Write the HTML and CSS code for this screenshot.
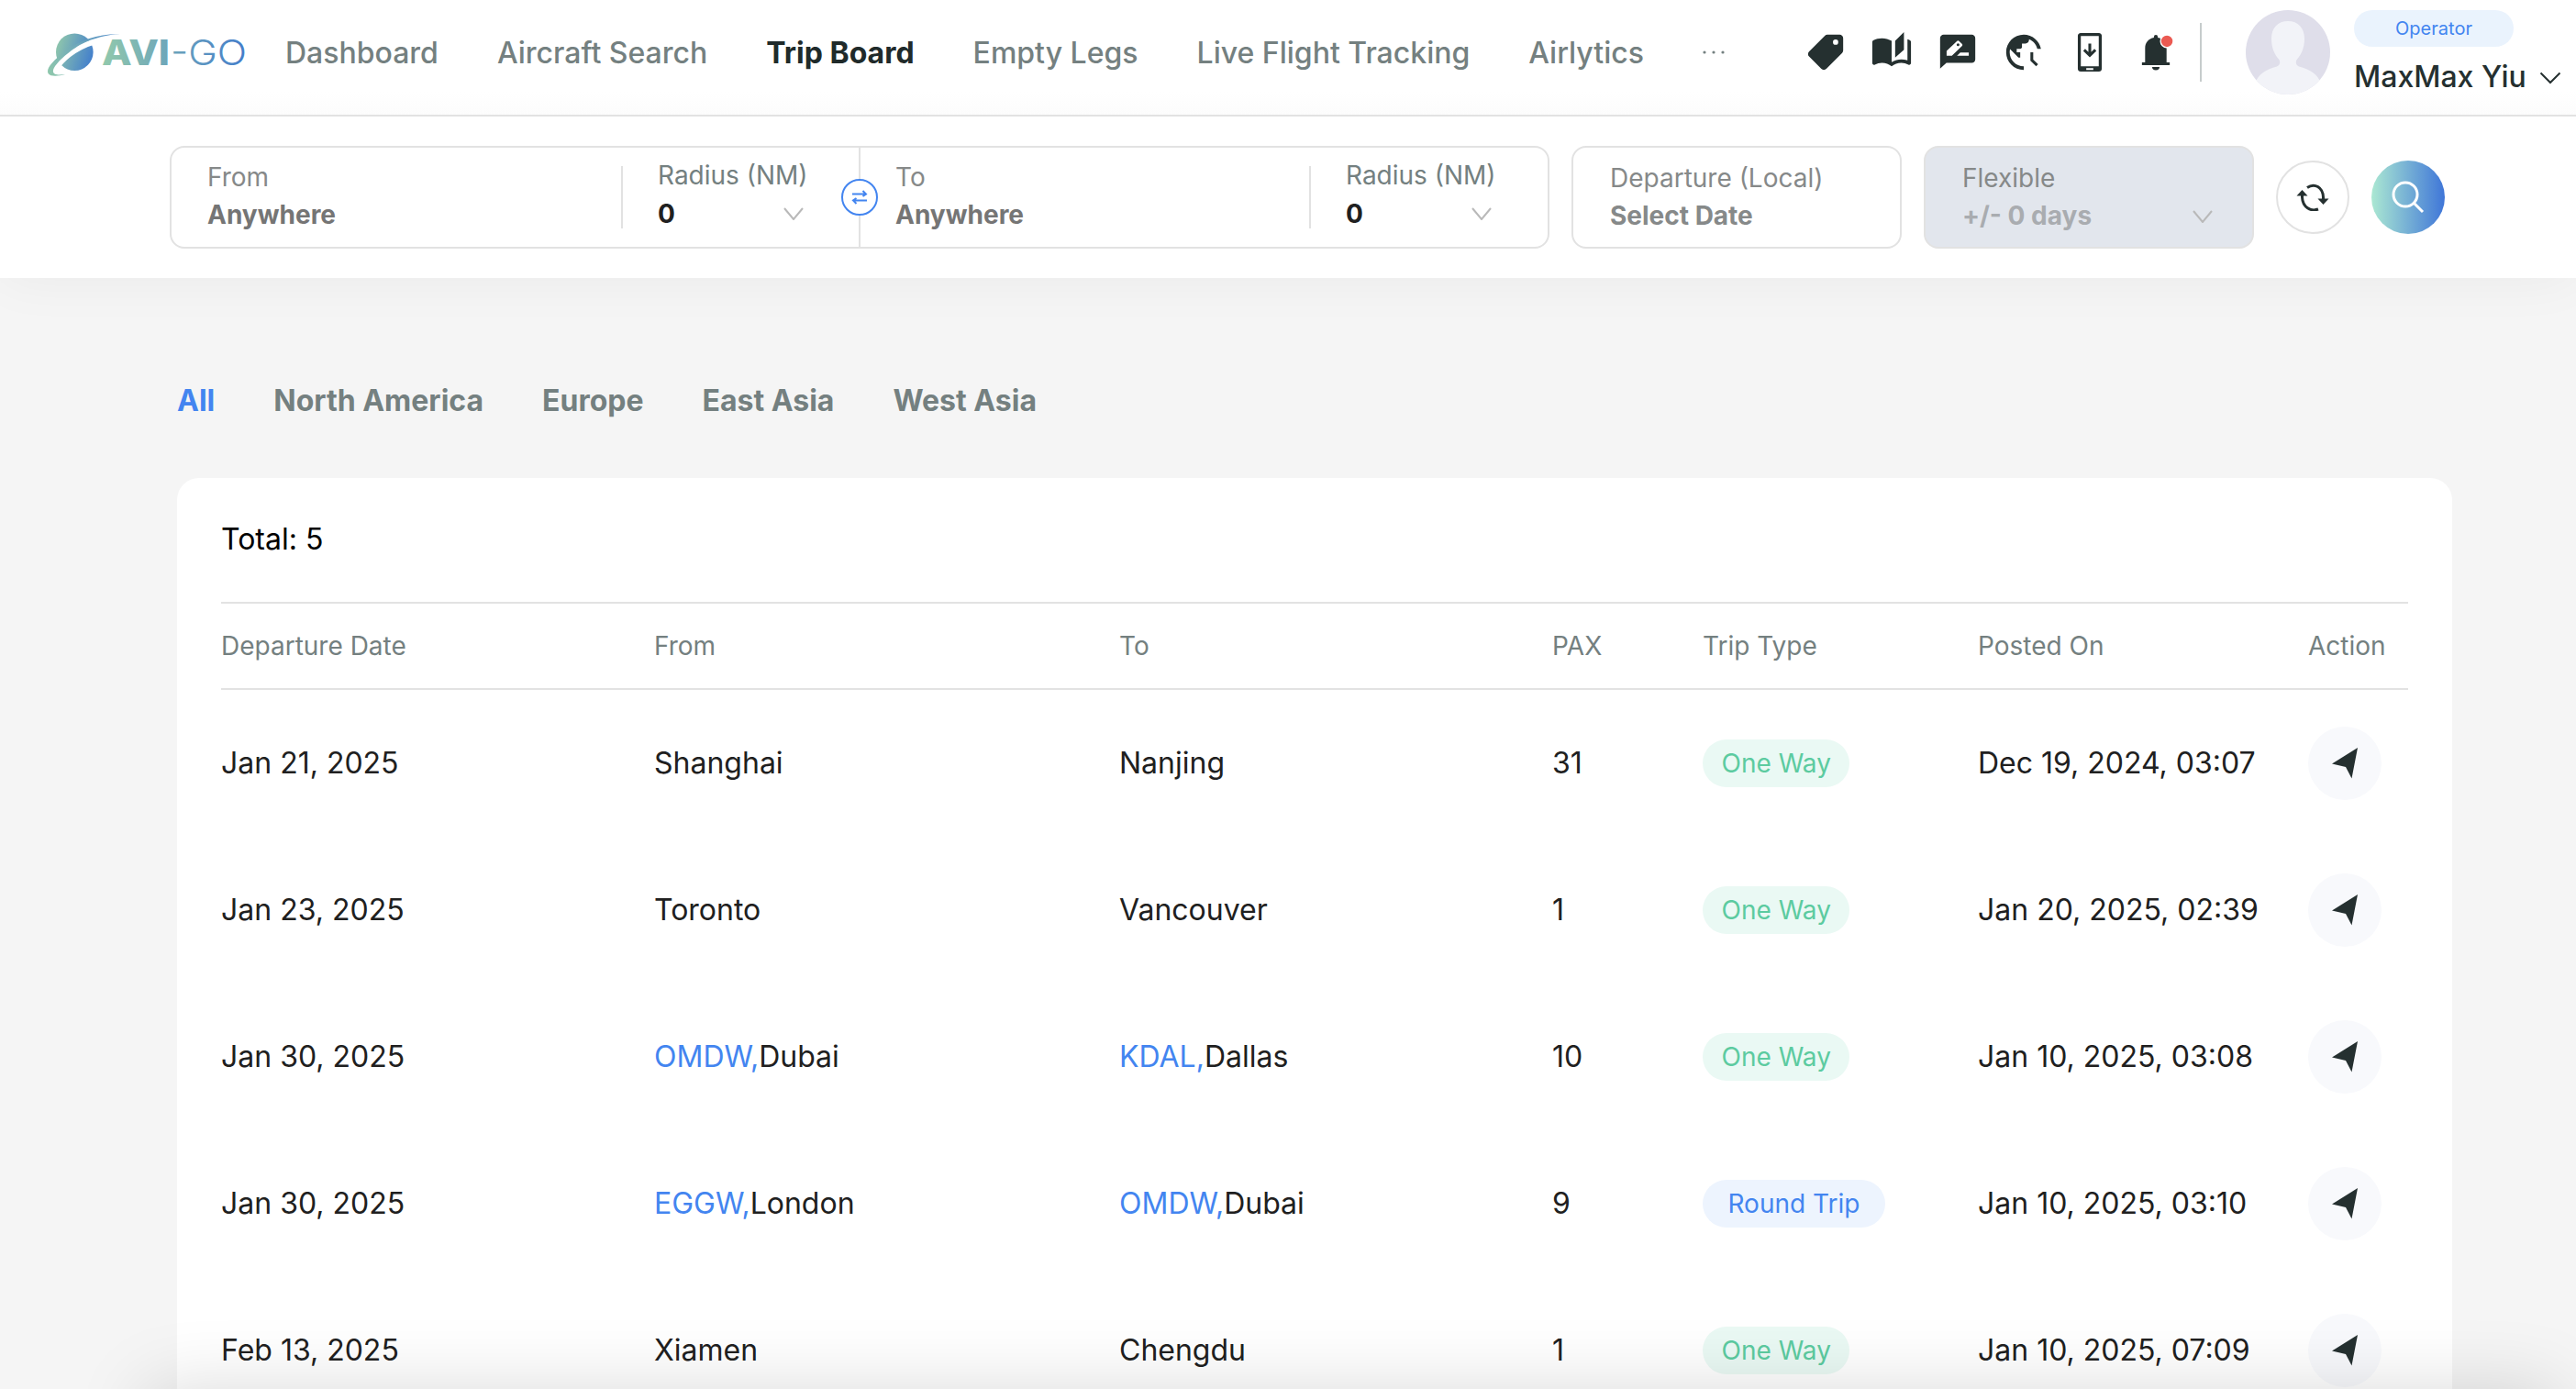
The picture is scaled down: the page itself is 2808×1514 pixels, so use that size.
FILE: index.html
```html
<!DOCTYPE html>
<html lang="en">

<head>
    <meta charset="UTF-8">
    <meta name="viewport" content="width=device-width, initial-scale=1.0">
    <title>Trip Board</title>
    <link rel="stylesheet" href="styles.css">
</head>

<body>
    <header class="header">
        <svg class="logo" viewBox="52 34 220 52">
            <defs>
                <linearGradient id="planet" x1="0" x2="1" y1="0.2" y2="0.5">
                    <stop offset="0" stop-color="#92c9ab" />
                    <stop offset="1" stop-color="#4581cb" />
                </linearGradient>
                <linearGradient id="ring" gradientUnits="userSpaceOnUse" x1="52" x2="131" y1="80" y2="37">
                    <stop offset="0" stop-color="#8fc8ac" />
                    <stop offset="1" stop-color="#4b86c9" />
                </linearGradient>
                <linearGradient id="word" gradientUnits="userSpaceOnUse" x1="111" x2="268" y1="0" y2="0">
                    <stop offset="0" stop-color="#92c9ac" />
                    <stop offset="1" stop-color="#437dca" />
                </linearGradient>
            </defs>
            <circle cx="81.3" cy="56.7" r="20.3" fill="url(#planet)" />
            <path d="M60 76C66 66 80 52 104 45" fill="none" stroke="#fff" stroke-width="6" />
            <path d="M131 37.2C108 36.5 88 43 71 56C57 66.500 50 75 52.500 80C55 84 64 83 71 81C64 82 57 82 58 76.500C60 69 74 57 87 49C102 41 118 37.500 131 37.200Z" fill="url(#ring)" />
            <g class="word">
                <text class="word-bold" x="111" y="71" textLength="74" lengthAdjust="spacingAndGlyphs">AVI</text>
                <text class="word-light" x="186" y="71" textLength="83" lengthAdjust="spacingAndGlyphs">-GO</text>
            </g>
        </svg>
        <nav class="nav">
            <a>Dashboard</a>
            <a>Aircraft Search</a>
            <a class="active">Trip Board</a>
            <a>Empty Legs</a>
            <a>Live Flight Tracking</a>
            <a>Airlytics</a>
            <svg class="more" viewBox="0 0 24 4"><circle cx="2" cy="2" r="1.600" /><circle cx="12" cy="2" r="1.600" /><circle cx="22" cy="2" r="1.600" /></svg>
        </nav>
        <div class="tools">
            <svg viewBox="0 0 24 24"><path transform="matrix(-1 0 0 1 24 0)" d="M21.410 11.580l-9-9C12.050 2.220 11.550 2 11 2H4c-1.100 0-2 .9-2 2v7c0 .55.22 1.050.59 1.420l9 9c.36.36.86.58 1.410.58.55 0 1.050-.22 1.410-.59l7-7c.37-.36.59-.86.59-1.410 0-.55-.23-1.060-.59-1.420zM6.300 7.700a1.500 1.500 0 1 1 0-3a1.500 1.500 0 0 1 0 3z" /></svg>
            <svg viewBox="0 0 24 24"><path d="M22.470 5.200C22 4.960 21.510 4.760 21 4.590v12.030C19.860 16.210 18.690 16 17.500 16c-1.900 0-3.780.54-5.500 1.580V5.480C10.380 4.550 8.510 4 6.500 4 4.710 4 3.020 4.440 1.530 5.200 1.200 5.360 1 5.710 1 6.080v12.080c0 .58.47.99 1 .99.16 0 .32-.04.48-.12C3.690 18.400 5.050 18 6.500 18c2.070 0 3.980.82 5.500 2 1.520-1.180 3.430-2 5.500-2 1.450 0 2.810.4 4.020 1.040.16.08.32.12.48.12.52 0 1-.41 1-.99V6.080c0-.37-.2-.72-.53-.88zM19 .5l-5 5V15l5-4.500V.5z" /></svg>
            <svg viewBox="0 0 24 24"><path d="M20 2H4c-1.100 0-2 .9-2 2v17.300L5.600 18H20c1.100 0 2-.9 2-2V4c0-1.100-.9-2-2-2zM5.700 14v-2.800l5.800-5.500c.4-.4 1-.4 1.400 0l1.500 1.500c.4.4.4.9 0 1.300L8.700 14h-3zm12.600 0h-6.700l1.900-1.900h4.800V14z" /><circle cx="12.200" cy="7.700" r=".8" /></svg>
            <svg viewBox="0 0 24 24"><path d="M12 20v2C6.480 22 2 17.520 2 12S6.480 2 12 2c4.840 0 8.870 3.440 9.800 8h-2.070c-.64-2.460-2.400-4.470-4.730-5.410V5c0 1.100-.9 2-2 2h-2v2c0 .55-.45 1-1 1H8v2h2v3H9l-4.790-4.790C4.080 10.790 4 11.380 4 12c0 4.410 3.590 8 8 8z" /><path class="line" d="M16.600 12v4.500l3 2.900" /></svg>
            <svg viewBox="0 0 24 24"><path fill-rule="evenodd" d="M6.800 1h10.400c.9 0 1.600.7 1.600 1.600v18.800c0 .9-.7 1.600-1.600 1.600H6.800c-.9 0-1.600-.7-1.600-1.600V2.600C5.200 1.700 5.900 1 6.800 1zM6.900 2.700V20h10.200V2.700zM10 21v1h4v-1z" /><path class="line" d="M12 7v6.500M8.800 10.600l3.200 3.100 3.200-3.100" /></svg>
            <svg viewBox="0 0 24 24"><path d="M10.900 3.200a1.100 1.100 0 0 1 2.200 0v.5C16.200 4.300 18.100 6.600 18.100 9.600v8.200h1.800v1.500H4.100v-1.500h1.800V9.600c0-3 1.900-5.300 5-5.900zM9.900 20.400h4.200a2.100 1.800 0 0 1-4.200 0z" /><circle class="dot" cx="18.300" cy="5.700" r="3.600" /></svg>
        </div>
        <div class="user">
            <svg class="avatar" viewBox="0 0 92 92">
                <clipPath id="round"><circle cx="46" cy="46" r="46" /></clipPath>
                <g clip-path="url(#round)">
                    <path d="M0 0H92V92H0Z" fill="#dfdeea" />
                    <path d="M46 12C57 12 64 19.500 64 31C64 42 60 49 56 53.500C54 56 54.500 60 58 61.500C70 65 78 69 82 80L82 92H10V80C14 69 22 65 34 61.500C37.500 60 38 56 36 53.500C32 49 28 42 28 31C28 19.500 35 12 46 12Z" fill="#f2f3f8" />
                </g>
            </svg>
            <div class="user-info">
                <span class="role">Operator</span>
                <span class="user-name">MaxMax Yiu
                    <svg class="user-arrow" viewBox="0 0 24 14"><path d="M1.500 1.500L12 12L22.500 1.500" /></svg>
                </span>
            </div>
        </div>
    </header>

    <section class="search">
        <div class="route">
            <div class="place">
                <label>From</label>
                <strong>Anywhere</strong>
            </div>
            <div class="radius">
                <label>Radius (NM)</label>
                <strong>0 <svg class="arrow" viewBox="0 0 22 14"><path d="M1 1L11 13L21 1" /></svg></strong>
            </div>
            <div class="place place-to">
                <label>To</label>
                <strong>Anywhere</strong>
            </div>
            <div class="radius">
                <label>Radius (NM)</label>
                <strong>0 <svg class="arrow" viewBox="0 0 22 14"><path d="M1 1L11 13L21 1" /></svg></strong>
            </div>
            <span class="swap"><svg viewBox="0 0 18 16"><path d="M1 4.500H16M12.500 1L16 4.500L12.500 7M17 11.500H2M5.500 9L2 11.500L5.500 15" /></svg></span>
        </div>
        <div class="field">
            <label>Departure (Local)</label>
            <strong>Select Date</strong>
        </div>
        <div class="field disabled">
            <label>Flexible</label>
            <strong>+/- 0 days <svg class="arrow" viewBox="0 0 22 14"><path d="M1 1L11 13L21 1" /></svg></strong>
        </div>
        <button class="round-btn">
            <svg viewBox="0 0 36 30"><path d="M12 4.500C20 -1 29 4 29.500 15V18M24 28C16 31 7 26 6.500 15V11" /><path class="tip" d="M23.500 16.500H35.500L29.500 23ZM.5 13.500H12.500L6.500 7Z" /></svg>
        </button>
        <button class="round-btn go-btn">
            <svg viewBox="0 0 36 36"><circle cx="15" cy="15" r="13" /><path d="M24.500 24.500L34 34" /></svg>
        </button>
    </section>

    <main>
        <div class="tabs">
            <a class="active">All</a>
            <a>North America</a>
            <a>Europe</a>
            <a>East Asia</a>
            <a>West Asia</a>
        </div>
        <div class="card">
            <p class="total">Total: 5</p>
            <table>
                <thead>
                    <tr>
                        <th class="col-date">Departure Date</th>
                        <th class="col-from">From</th>
                        <th class="col-to">To</th>
                        <th class="col-pax">PAX</th>
                        <th class="col-type">Trip Type</th>
                        <th class="col-posted">Posted On</th>
                        <th>Action</th>
                    </tr>
                </thead>
                <tbody>
                    <tr>
                        <td>Jan 21, 2025</td>
                        <td>Shanghai</td>
                        <td>Nanjing</td>
                        <td>31</td>
                        <td><span class="tag">One Way</span></td>
                        <td>Dec 19, 2024, 03:07</td>
                        <td><span class="send"><svg viewBox="0 0 28 34"><path d="M28 0L21.500 33.500L15 21L0 17.500Z" /></svg></span></td>
                    </tr>
                    <tr>
                        <td>Jan 23, 2025</td>
                        <td>Toronto</td>
                        <td>Vancouver</td>
                        <td>1</td>
                        <td><span class="tag">One Way</span></td>
                        <td>Jan 20, 2025, 02:39</td>
                        <td><span class="send"><svg viewBox="0 0 28 34"><path d="M28 0L21.500 33.500L15 21L0 17.500Z" /></svg></span></td>
                    </tr>
                    <tr>
                        <td>Jan 30, 2025</td>
                        <td><a>OMDW,</a>Dubai</td>
                        <td><a>KDAL,</a>Dallas</td>
                        <td>10</td>
                        <td><span class="tag">One Way</span></td>
                        <td>Jan 10, 2025, 03:08</td>
                        <td><span class="send"><svg viewBox="0 0 28 34"><path d="M28 0L21.500 33.500L15 21L0 17.500Z" /></svg></span></td>
                    </tr>
                    <tr>
                        <td>Jan 30, 2025</td>
                        <td><a>EGGW,</a>London</td>
                        <td><a>OMDW,</a>Dubai</td>
                        <td>9</td>
                        <td><span class="tag tag-round">Round Trip</span></td>
                        <td>Jan 10, 2025, 03:10</td>
                        <td><span class="send"><svg viewBox="0 0 28 34"><path d="M28 0L21.500 33.500L15 21L0 17.500Z" /></svg></span></td>
                    </tr>
                    <tr>
                        <td>Feb 13, 2025</td>
                        <td>Xiamen</td>
                        <td>Chengdu</td>
                        <td>1</td>
                        <td><span class="tag">One Way</span></td>
                        <td>Jan 10, 2025, 07:09</td>
                        <td><span class="send"><svg viewBox="0 0 28 34"><path d="M28 0L21.500 33.500L15 21L0 17.500Z" /></svg></span></td>
                    </tr>
                </tbody>
            </table>
        </div>
    </main>
    <div class="bottom-shadow"></div>
</body>

</html>
```

FILE: styles.css
```css
* {
    box-sizing: border-box;
}

body {
    margin: 0;
    height: 1514px;
    overflow: hidden;
    background: #f5f5f5;
    color: #202020;
    font-family: Inter, sans-serif;
    font-size: 32px;
}

/* header */
.header {
    display: flex;
    align-items: center;
    height: 127px;
    padding: 0 0 11px 52px;
    background: linear-gradient(#fff 100px, #fcfcfc);
    border-bottom: 2px solid #e2e2e2;
}

.logo {
    width: 220px;
    height: 52px;
    margin-top: 6px;
    flex: none;
}

.word {
    fill: url(#word);
    font-size: 38.5px;
}

.word-bold {
    font-weight: 800;
}

.word-light {
    font-weight: 300;
}

.nav {
    display: flex;
    align-items: center;
    gap: 64px;
    width: 1657px;
    margin-left: 39px;
    color: #748080;
    font-weight: 500;
    white-space: nowrap;
}

.nav .active {
    color: #202a2a;
    font-weight: 700;
}

.more {
    width: 24px;
    height: 4px;
    fill: #748080;
}

.tools {
    display: flex;
    align-items: center;
    gap: 26px;
    flex: none;
    height: 64px;
    width: 433px;
    margin-left: -1px;
    border-right: 2px solid #c6cccc;
}

.tools svg {
    width: 46px;
    height: 46px;
    flex: none;
    fill: #253030;
}

.tools .line {
    fill: none;
    stroke: #253030;
    stroke-width: 1.6;
}

.tools .dot {
    fill: #eb5a52;
    stroke: #fff;
    stroke-width: .7;
}

.user {
    display: flex;
    flex: none;
    margin-left: 48px;
}

.avatar {
    width: 92px;
    height: 92px;
}

.user-info {
    margin-left: 26px;
}

.role {
    display: block;
    width: 174px;
    height: 40px;
    border-radius: 20px;
    background: #eaf3fd;
    color: #4385f0;
    font-size: 20px;
    line-height: 40px;
    text-align: center;
}

.user-name {
    display: flex;
    align-items: center;
    height: 64px;
    margin-bottom: -12px;
    color: #253030;
    font-weight: 500;
    white-space: nowrap;
}

.user-arrow {
    width: 24px;
    height: 14px;
    margin: 4px 0 0 14px;
    fill: none;
    stroke: #253030;
    stroke-width: 2;
}

/* search bar */
.search {
    display: flex;
    align-items: center;
    gap: 24px;
    height: 176px;
    padding-left: 185px;
    background: #fff;
    box-shadow: 0 0 60px rgba(0, 0, 0, .05);
    /* keep the shadow off the header */
    clip-path: inset(0 0 -80px 0);
}

.search label,
.search strong {
    display: block;
    font-size: 28px;
    line-height: 42px;
    white-space: nowrap;
}

.search label {
    color: #868989;
}

.search strong {
    color: #757575;
    font-weight: 700;
}

.route {
    position: relative;
    display: flex;
    align-items: center;
    width: 1504px;
    height: 112px;
    border: 2px solid #e2e2e2;
    border-radius: 16px;
}

.place {
    width: 490px;
    height: 108px;
    padding: 11px 0 0 39px;
}

.place strong {
    line-height: 40px;
}

.place-to {
    border-left: 2px solid #e2e2e2;
    padding-left: 38px;
    width: 491px;
}

.radius {
    height: 68px;
    width: 259px;
    padding-left: 38px;
    border-left: 2px solid #e2e2e2;
}

.radius label {
    margin-top: -11px;
    color: #748080;
}

.search .radius strong {
    display: flex;
    align-items: center;
    justify-content: space-between;
    width: 159px;
    color: #202020;
}

.arrow {
    width: 22px;
    height: 14px;
    fill: none;
    stroke: #b9b9b9;
    stroke-width: 2;
}

.swap {
    position: absolute;
    left: 730px;
    top: 34px;
    display: flex;
    align-items: center;
    justify-content: center;
    width: 40px;
    height: 40px;
    border: 2px solid #4385f0;
    border-radius: 50%;
    background: #fff;
}

.swap svg {
    width: 18px;
    height: 16px;
    fill: none;
    stroke: #4385f0;
    stroke-width: 2;
}

.field {
    width: 360px;
    height: 112px;
    padding: 13px 40px 0;
    border: 2px solid #e2e2e2;
    border-radius: 16px;
}

.search .field label,
.search .field strong {
    line-height: 41px;
}

.search .field strong {
    color: #868989;
}

.disabled {
    background: #e2e6ed;
}

.search .disabled strong {
    display: flex;
    align-items: center;
    justify-content: space-between;
    padding-right: 3px;
    color: #a9acb0;
}

.round-btn {
    display: flex;
    align-items: center;
    justify-content: center;
    width: 80px;
    height: 80px;
    padding: 0;
    border: 2px solid #e2e2e2;
    border-radius: 50%;
    background: #fff;
}

.round-btn svg {
    width: 36px;
    height: 30px;
    fill: none;
    stroke: #253030;
    stroke-width: 3;
}

.round-btn .tip {
    fill: #253030;
    stroke: none;
}

.go-btn {
    border: none;
    background: linear-gradient(90deg, #abe8d2, #3f76d8);
}

.go-btn svg {
    height: 36px;
    stroke: #fff;
}

/* region tabs */
main {
    padding: 114px 135px 0 193px;
}

.tabs {
    display: flex;
    gap: 64px;
    height: 104px;
    line-height: 40px;
    color: #748080;
    font-weight: 700;
}

.tabs .active {
    color: #4385f0;
}

/* trip table */
.card {
    height: 1100px;
    padding: 0 48px;
    background: #fff;
    border-radius: 24px;
}

.total {
    height: 135px;
    margin: 0;
    line-height: 134px;
    color: #000;
}

table {
    width: 100%;
    table-layout: fixed;
    border-collapse: separate;
    border-spacing: 0;
}

th {
    height: 96px;
    padding: 0;
    border: solid #e2e2e2;
    border-width: 2px 0;
    color: #748080;
    font-size: 28px;
    font-weight: 400;
    text-align: left;
}

td {
    height: 160px;
    padding: 0;
    white-space: nowrap;
}

td:not(:has(span)) {
    padding-bottom: 2px;
}

td a {
    color: #4385f0;
}

.col-date {
    width: 472px;
}

.col-from {
    width: 507px;
}

.col-to {
    width: 472px;
}

.col-pax {
    width: 164px;
}

.col-type {
    width: 300px;
}

.col-posted {
    width: 360px;
}

.tag {
    display: inline-block;
    height: 52px;
    padding: 0 20.5px;
    border-radius: 26px;
    background: #eaf9f4;
    color: #5ccba0;
    font-size: 28px;
    line-height: 52px;
    vertical-align: middle;
}

.tag-round {
    padding: 0 27.5px;
    background: #edf4fe;
    color: #4385f0;
}

.send {
    display: flex;
    align-items: center;
    justify-content: center;
    width: 80px;
    height: 80px;
    border-radius: 50%;
    background: #f8f9fc;
}

.send svg {
    width: 28px;
    height: 34px;
    fill: #253030;
}

/* shadow of the panel docked under the page */
.bottom-shadow {
    position: fixed;
    top: 1514px;
    left: 160px;
    right: 20px;
    height: 100px;
    box-shadow: 0 0 80px rgba(0, 0, 0, .15);
}
```
